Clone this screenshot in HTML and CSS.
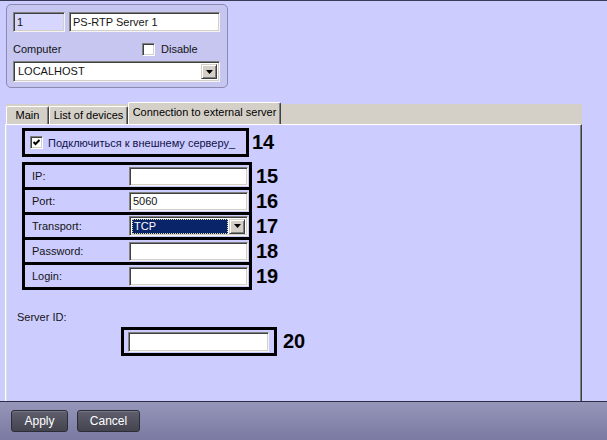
FILE: index.html
```html
<!DOCTYPE html>
<html lang="en">
<head>
    <meta charset="UTF-8">
    <title>PS-RTP Server 1 - Connection to external server</title>
    <link rel="stylesheet" href="styles.css">
</head>
<body>
    <div class="window">
        <div class="content">
            <!-- object header -->
            <div class="group">
                <div class="group-row">
                    <div class="field field-id">1</div>
                    <div class="field field-name">PS-RTP Server 1</div>
                </div>
                <div class="group-row group-labels">
                    <span class="computer-label">Computer</span>
                    <span class="checkbox"></span>
                    <span class="check-text">Disable</span>
                </div>
                <div class="combo combo-wide">
                    <span class="combo-text">LOCALHOST</span>
                    <span class="combo-btn"><svg width="7" height="4" viewBox="0 0 7 4"><polygon points="0,0 7,0 3.5,4" fill="#000"/></svg></span>
                </div>
            </div>

            <!-- tabs -->
            <div class="tabs">
                <div class="tab tab-main">Main</div>
                <div class="tab tab-list">List of devices</div>
                <div class="tab tab-active">Connection to external server</div>
            </div>

            <div class="panel">
                <div class="callout-row first-row">
                    <div class="callout callout-connect">
                        <span class="checkbox"><svg width="9" height="9" viewBox="0 0 9 9"><path d="M1.5 4 L3.5 6 L7.5 2" fill="none" stroke="#000" stroke-width="2"/></svg></span>
                        <span class="connect-text">Подключиться к внешнему серверу_</span>
                    </div>
                    <span class="num num-tall">14</span>
                </div>

                <div class="callout-row fields-row">
                    <div class="callout fields">
                        <div class="field-row"><span>IP:</span><div class="field"></div></div>
                        <div class="field-row"><span>Port:</span><div class="field">5060</div></div>
                        <div class="field-row">
                            <span>Transport:</span>
                            <div class="combo">
                                <span class="combo-text combo-selected">TCP</span>
                                <span class="combo-btn"><svg width="7" height="4" viewBox="0 0 7 4"><polygon points="0,0 7,0 3.5,4" fill="#000"/></svg></span>
                            </div>
                        </div>
                        <div class="field-row"><span>Password:</span><div class="field"></div></div>
                        <div class="field-row"><span>Login:</span><div class="field"></div></div>
                    </div>
                    <div class="nums">
                        <span class="num">15</span>
                        <span class="num">16</span>
                        <span class="num">17</span>
                        <span class="num">18</span>
                        <span class="num">19</span>
                    </div>
                </div>

                <div class="server-label">Server ID:</div>
                <div class="callout-row server-row">
                    <div class="callout callout-server">
                        <div class="field field-server"></div>
                    </div>
                    <span class="num num-tall num-server">20</span>
                </div>
            </div>
        </div>

        <div class="footer">
            <button class="btn btn-apply">Apply</button>
            <button class="btn btn-cancel">Cancel</button>
        </div>
    </div>
</body>
</html>
```

FILE: styles.css
```css
html, body {
    margin: 0;
    padding: 0;
}

body {
    width: 607px;
    height: 440px;
    overflow: hidden;
    background-color: #ccccff;
    font-family: "Liberation Sans", Arial, sans-serif;
    font-size: 11px;
    color: #141414;
}

.window {
    display: flex;
    flex-direction: column;
    height: 440px;
    box-sizing: border-box;
    border-top: 1px solid #3a3a58;
}

.content {
    flex: 1;
    display: flex;
    flex-direction: column;
    min-height: 0;
}

/* header group */
.group {
    margin: 3px 0 0 6px;
    width: 222px;
    height: 84px;
    box-sizing: border-box;
    padding: 7px 7px 0 6px;
    border: 1px solid #8a8ab2;
    border-radius: 5px;
    background-color: #c6c6f0;
}

.group-row {
    display: flex;
    gap: 4px;
    height: 20px;
}

.group-labels {
    margin-top: 7px;
    align-items: center;
    gap: 0;
}

.computer-label {
    width: 129px;
}

.check-text {
    margin-left: 6px;
}

.field {
    box-sizing: border-box;
    height: 20px;
    padding: 0 3px;
    line-height: 18px;
    background-color: #fff;
    border: 1px solid;
    border-color: #808080 #f4f4f4 #f4f4f4 #808080;
    box-shadow: inset 1px 1px 0 #404040, inset -1px -1px 0 #d4d0c8;
    white-space: nowrap;
}

.field-id {
    width: 52px;
    background-color: #d6d6ff;
}

.field-name {
    flex: 1;
}

.checkbox {
    box-sizing: border-box;
    width: 13px;
    height: 13px;
    display: inline-flex;
    align-items: center;
    justify-content: center;
    background-color: #fff;
    border: 1px solid;
    border-color: #808080 #fff #fff #808080;
    box-shadow: inset 1px 1px 0 #404040, inset -1px -1px 0 #d4d0c8;
}

/* dropdowns */
.combo {
    box-sizing: border-box;
    height: 20px;
    display: flex;
    align-items: center;
    padding: 2px;
    background-color: #fff;
    border: 1px solid;
    border-color: #808080 #f4f4f4 #f4f4f4 #808080;
    box-shadow: inset 1px 1px 0 #404040, inset -1px -1px 0 #d4d0c8;
}

.combo-wide {
    margin-top: 2px;
    height: 21px;
}

.combo-text {
    flex: 1;
    padding-left: 2px;
    line-height: 15px;
}

.combo-selected {
    height: 15px;
    background-color: #0a246a;
    color: #fff;
    outline: 1px dotted #d8d8a0;
    outline-offset: -1px;
    margin-right: 1px;
}

.combo-btn {
    box-sizing: border-box;
    width: 16px;
    height: 15px;
    display: flex;
    align-items: center;
    justify-content: center;
    background-color: #d4d0c8;
    border: 1px solid;
    border-color: #d4d0c8 #404040 #404040 #d4d0c8;
    box-shadow: inset 1px 1px 0 #fff, inset -1px -1px 0 #808080;
}

/* tabs */
.tabs {
    margin: 16px 0 0 6px;
    width: 576px;
    height: 20px;
    display: flex;
    align-items: flex-end;
    background-color: #d4d0c8;
}

.tab {
    box-sizing: border-box;
    height: 18px;
    line-height: 16px;
    text-align: center;
    color: #000;
    white-space: nowrap;
    background-color: #d4d0c8;
    border-top: 1px solid #fff;
    border-left: 1px solid #fff;
    border-right: 1px solid #404040;
    box-shadow: inset -1px 0 0 #808080;
    border-radius: 2px 2px 0 0;
}

.tab-main {
    width: 43px;
}

.tab-list {
    width: 79px;
}

.tab-active {
    width: 153px;
    height: 22px;
    line-height: 18px;
}

.panel {
    flex: 1;
    margin-left: 5px;
    width: 577px;
    box-sizing: border-box;
    border-top: 1px solid #fff;
    border-left: 1px solid #fff;
    border-right: 1px solid #404040;
    box-shadow: inset 1px 0 0 #dcdcdc, inset -1px 0 0 #808080;
    background-color: #ccccff;
}

/* callouts */
.callout-row {
    display: flex;
    align-items: flex-start;
    margin-left: 16px;
}

.first-row {
    margin-top: 3px;
}

.callout {
    box-sizing: border-box;
    border: 3px solid #000;
}

.callout-connect {
    width: 227px;
    height: 29px;
    display: flex;
    align-items: center;
    padding-left: 5px;
    gap: 5px;
}

.connect-text {
    color: #10104a;
}

.num {
    font-size: 20px;
    font-weight: bold;
    color: #000;
    height: 22px;
    line-height: 22px;
}

.num-tall {
    height: 29px;
    line-height: 29px;
    margin-left: 3px;
}

.fields-row {
    margin-top: 5px;
}

.fields {
    width: 230px;
}

.field-row {
    height: 22px;
    display: grid;
    grid-template-columns: 104px 119px;
    align-items: center;
}

.field-row + .field-row {
    border-top: 3px solid #000;
}

.field-row > span {
    padding-left: 7px;
}

.field-row .field {
    height: 19px;
    line-height: 17px;
}

.nums {
    display: flex;
    flex-direction: column;
    gap: 3px;
    padding-top: 3px;
    margin-left: 4px;
}

.server-label {
    margin: 21px 0 0 11px;
    line-height: 13px;
}

.server-row {
    margin: 3px 0 0 115px;
}

.callout-server {
    width: 156px;
    height: 29px;
    padding: 2px 0 0 4px;
}

.field-server {
    width: 141px;
}

.num-server {
    margin-left: 6px;
}

/* footer */
.footer {
    height: 39px;
    box-sizing: border-box;
    display: flex;
    align-items: flex-start;
    gap: 9px;
    padding: 8px 0 0 11px;
    border-top: 1px solid #2e2e44;
    background: linear-gradient(#9696ba, #7a7aa2);
}

.btn {
    height: 22px;
    padding: 0;
    border: 1px solid #2c2c38;
    border-radius: 3px;
    background: linear-gradient(#5e5e6e, #44444f);
    box-shadow: inset 0 1px 0 rgba(255, 255, 255, 0.15);
    color: #fff;
    font-family: "Liberation Sans", Arial, sans-serif;
    font-size: 12px;
}

.btn-apply {
    width: 57px;
}

.btn-cancel {
    width: 63px;
}
```
